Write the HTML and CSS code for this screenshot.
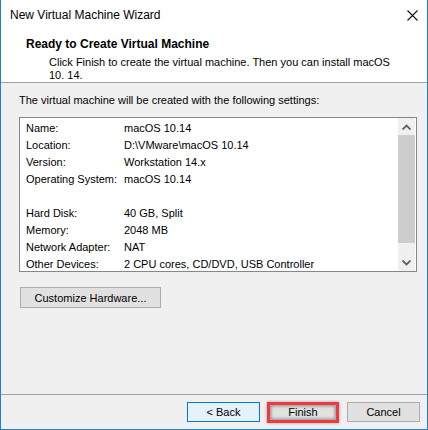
FILE: index.html
```html
<!DOCTYPE html>
<html lang="en">
<head>
    <meta charset="UTF-8">
    <title>New Virtual Machine Wizard</title>
    <link rel="stylesheet" href="styles.css">
</head>
<body>
    <div class="window">
        <div class="titlebar">
            <span class="title">New Virtual Machine Wizard</span>
            <svg class="close" width="11" height="11" viewBox="0 0 11 11">
                <path d="M0.5 0.5 L10.5 10.5 M10.5 0.5 L0.5 10.5" stroke="#111" stroke-width="1.1" fill="none"/>
            </svg>
        </div>
        <div class="header">
            <div class="heading">Ready to Create Virtual Machine</div>
            <div class="subtext">Click Finish to create the virtual machine. Then you can install macOS<br>10. 14.</div>
        </div>
        <div class="content">
            <div class="intro">The virtual machine will be created with the following settings:</div>
            <div class="listbox">
                <div class="rows">
                    <div class="row"><span class="key">Name:</span><span>macOS 10.14</span></div>
                    <div class="row"><span class="key">Location:</span><span>D:\VMware\macOS 10.14</span></div>
                    <div class="row"><span class="key">Version:</span><span>Workstation 14.x</span></div>
                    <div class="row"><span class="key">Operating System:</span><span>macOS 10.14</span></div>
                    <div class="row"></div>
                    <div class="row"><span class="key">Hard Disk:</span><span>40 GB, Split</span></div>
                    <div class="row"><span class="key">Memory:</span><span>2048 MB</span></div>
                    <div class="row"><span class="key">Network Adapter:</span><span>NAT</span></div>
                    <div class="row"><span class="key">Other Devices:</span><span>2 CPU cores, CD/DVD, USB Controller</span></div>
                </div>
                <div class="scrollbar">
                    <div class="arrow">
                        <svg width="9" height="6" viewBox="0 0 9 6"><path d="M0.5 5.5 L4.5 1.5 L8.5 5.5" stroke="#606060" stroke-width="1.8" fill="none"/></svg>
                    </div>
                    <div class="track"><div class="thumb"></div></div>
                    <div class="arrow">
                        <svg width="9" height="6" viewBox="0 0 9 6"><path d="M0.5 0.5 L4.5 4.5 L8.5 0.5" stroke="#606060" stroke-width="1.8" fill="none"/></svg>
                    </div>
                </div>
            </div>
            <button class="btn customize">Customize Hardware...</button>
        </div>
        <div class="footer">
            <button class="btn back">&lt; Back</button>
            <div class="highlight"><button class="btn finish">Finish</button></div>
            <button class="btn cancel">Cancel</button>
        </div>
    </div>
</body>
</html>
```

FILE: styles.css
```css
body{
    margin: 0;
    font-family: "Liberation Sans", Arial, sans-serif;
    font-size: 11px;
    color: #000;
}
.window{
    width: 428px;
    height: 430px;
    box-sizing: border-box;
    border: 1px solid #1883d7;
    border-top: none;
    display: flex;
    flex-direction: column;
    background: #fff;
}
.titlebar{
    height: 30px;
    display: flex;
    align-items: center;
    justify-content: space-between;
    padding: 0 9px 0 9px;
    font-size: 12px;
    white-space: nowrap;
}
.header{
    height: 53px;
    box-sizing: border-box;
    padding: 6px 0 0 25px;
    border-bottom: 1px solid #a0a0a0;
    white-space: nowrap;
}
.heading{
    font-weight: bold;
    font-size: 12px;
    line-height: 16px;
}
.subtext{
    padding-left: 23px;
    line-height: 13px;
    margin-top: 4px;
}
.content{
    flex: 1;
    background: #f0f0f0;
    padding: 9px 10px 0 18px;
}
.intro{
    line-height: 16px;
    white-space: nowrap;
}
.listbox{
    margin-top: 9px;
    height: 155px;
    box-sizing: border-box;
    border: 1px solid #828790;
    background: #fff;
    display: flex;
}
.rows{
    flex: 1;
    padding: 2px 0 0 6px;
}
.row{
    display: flex;
    height: 17px;
    line-height: 17px;
    white-space: nowrap;
}
.key{
    width: 98px;
}
.scrollbar{
    width: 17px;
    margin-right: 1px;
    background: #f0f0f0;
    display: flex;
    flex-direction: column;
}
.arrow{
    height: 17px;
    display: flex;
    align-items: center;
    justify-content: center;
}
.track{
    flex: 1;
}
.thumb{
    height: 108px;
    background: #cdcdcd;
}
.btn{
    font-family: inherit;
    font-size: 11px;
    line-height: 14px;
    color: #000;
    background: #e1e1e1;
    border: 1px solid #adadad;
    padding: 0;
    height: 21px;
}
.customize{
    margin-top: 15px;
    width: 141px;
    margin-left: 1px;
}
.footer{
    height: 35px;
    box-sizing: border-box;
    background: #f0f0f0;
    border-top: 1px solid #a0a0a0;
    display: flex;
    align-items: center;
    justify-content: flex-end;
    padding-right: 7px;
}
.back{
    width: 73px;
    height: 20px;
    background: #e5f1fb;
    border-color: #0078d7;
}
.highlight{
    margin-left: 7px;
    margin-right: 8px;
    border: 3px solid #ec3a3f;
    box-shadow: 0 0 3px rgba(0,0,0,0.35);
}
.finish{
    display: block;
    width: 66px;
    height: 15px;
    line-height: 13px;
    box-shadow: inset 0 0 3px rgba(0,0,0,0.45);
}
.cancel{
    width: 73px;
    height: 20px;
}
```
